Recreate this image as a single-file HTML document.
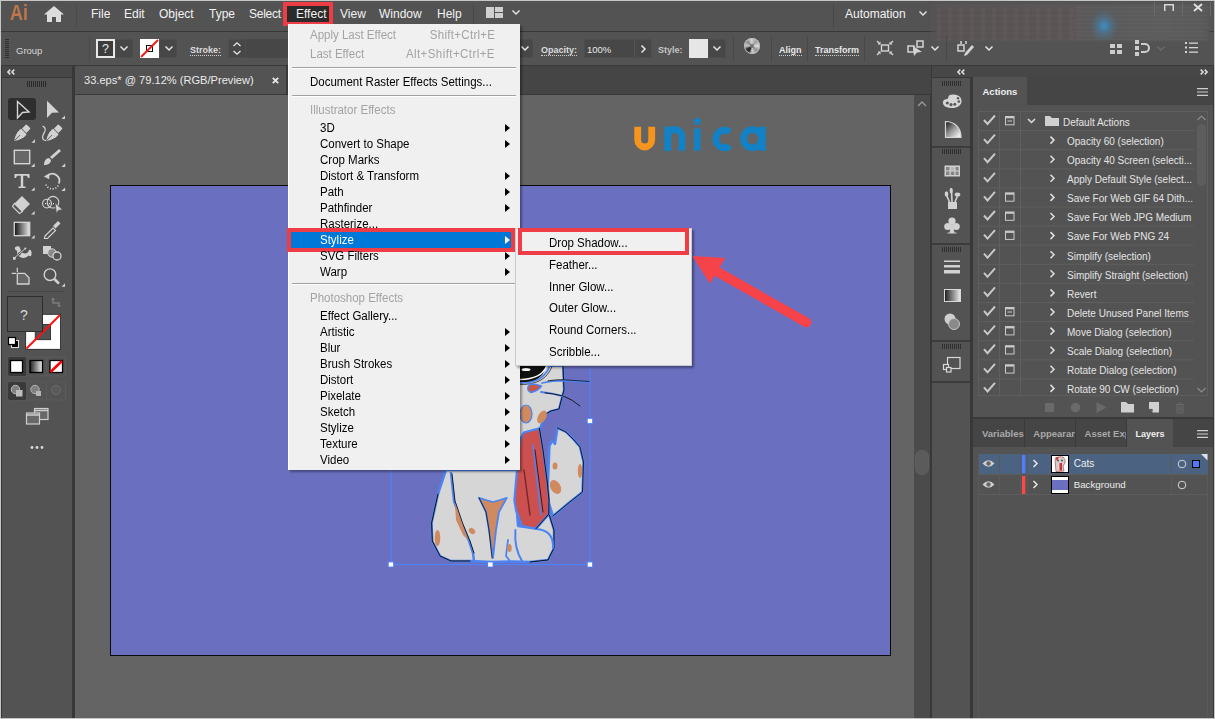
<!DOCTYPE html>
<html><head><meta charset="utf-8">
<style>
*{margin:0;padding:0;box-sizing:border-box}
html,body{width:1215px;height:719px;overflow:hidden}
body{position:relative;background:#c6c6c6;font-family:"Liberation Sans",sans-serif;color:#e6e6e6}
.a{position:absolute}
.t{position:absolute;white-space:nowrap;line-height:1}
svg{position:absolute;overflow:visible}
/* frame */
#frame{left:1px;top:1px;width:1213px;height:717px;background:#383838}
#menubar{left:1px;top:1px;width:1213px;height:30px;background:#535353}
#ctrl{left:1px;top:32px;width:1213px;height:33px;background:#535353}
#lphead{left:2px;top:66px;width:70px;height:11px;background:#474747}
#lp{left:2px;top:78px;width:70px;height:640px;background:#535353}
#tabbar{left:75px;top:66px;width:856px;height:28px;background:#454545}
#tab{left:75px;top:66px;width:211px;height:28px;background:#535353}
#canvas{left:75px;top:95px;width:839px;height:623px;background:#646464}
#vscroll{left:914px;top:95px;width:16px;height:623px;background:#4b4b4b}
#artboard{left:110px;top:185px;width:781px;height:471px;background:#6b6fc0;border:1px solid #0a0a0a}
#rhead{left:932px;top:66px;width:281px;height:11px;background:#474747}
#dock{left:932px;top:78px;width:38px;height:640px;background:#535353}
#rp{left:973px;top:78px;width:240px;height:640px;background:#535353}
.mi{font-size:12px;color:#f2f2f2;top:8px}
.lbl{font-size:9px;font-weight:bold;color:#dcdcdc}
.dot{border-bottom:1px dotted #cfcfcf}
.box{position:absolute;background:#474747;border:1px solid #4d4d4d;border-radius:2px}
.vd{position:absolute;width:1px;background:#484848}
</style></head><body>
<div class="a" id="frame"></div>
<div class="a" id="menubar"></div>
<div class="a" id="ctrl"></div>
<div class="a" id="lphead"></div>
<div class="a" id="lp"></div>
<div class="a" id="tabbar"></div>
<div class="a" id="tab"></div>
<div class="a" id="canvas"></div>
<div class="a" id="vscroll"></div>
<div class="a" id="artboard"></div>
<!-- CAT -->
<svg style="left:0;top:0" width="1215" height="719" viewBox="0 0 1215 719">
<g stroke-linejoin="round" stroke-linecap="round">
<rect x="391.5" y="276.5" width="198.5" height="288" fill="none" stroke="#4a86ff" stroke-width="1"/>
<!-- tail -->
<path d="M548 500 L548 482 L549.5 446 L552 441 L555 444 L557.5 428 L566 432 L574 440 L580 447 L583.5 462 L582.5 492 L568 503.5 L553 516 Z" fill="#d6d6d6" stroke="#4c84f2" stroke-width="2.4"/>
<path d="M557.5 428 L566 432 L574 440 L580 447 L583.5 462 L582.5 492 L568 503.5 L553 516" fill="none" stroke="#111" stroke-width="0.9"/>
<ellipse cx="555" cy="466" rx="2.5" ry="3.5" fill="#d08a5f"/>
<ellipse cx="555.5" cy="487" rx="5" ry="7.5" fill="#d08a5f" transform="rotate(-30 555.5 487)"/>
<ellipse cx="580" cy="471" rx="2.2" ry="7" fill="#d08a5f"/>
<!-- head right of menu -->
<path d="M518 366 L563 366 L564 390 L561 401 L559 409 L551 411 L546 414 L540 428 L532 436 L518 438 Z" fill="#d6d6d6" stroke="#4c84f2" stroke-width="2.2"/>
<path d="M563 366 L564 390 L561 401 L559 409 L551 411 L546 414" fill="none" stroke="#111" stroke-width="1"/>
<path d="M519 366 H546 Q544 377 533 381.5 Q526 383 519 382 Z" fill="#111"/>
<ellipse cx="526" cy="369.5" rx="4.5" ry="1.6" fill="#fff"/>
<path d="M520.5 379.5 Q541 379 546.5 366.5" fill="none" stroke="#fff" stroke-width="1.6"/>
<path d="M519 383 Q543 383.5 549.5 366.5" fill="none" stroke="#4c84f2" stroke-width="1.8"/>
<path d="M519 384.5 Q545 385.5 552 366.5" fill="none" stroke="#111" stroke-width="0.7"/>
<path d="M530 384 Q536 384 541.5 386 Q538 391 531 392.5 Q527 391 528 387 Z" fill="#c85545" stroke="#4c84f2" stroke-width="1.4"/>
<path d="M542 383 Q552 380.5 564 380.5 L589 382" fill="none" stroke="#4c84f2" stroke-width="1.8"/>
<path d="M548 380.8 Q556 379.5 564 379.8 L589 381.5" fill="none" stroke="#111" stroke-width="0.8"/>
<path d="M541 392 Q552 393 564 396.5" fill="none" stroke="#4c84f2" stroke-width="2"/>
<path d="M545 392.8 Q553 393.5 563 396 Q572 399 580 406" fill="none" stroke="#111" stroke-width="0.9"/>
<ellipse cx="526" cy="414" rx="6" ry="9" fill="#d08a5f" stroke="#4c84f2" stroke-width="1.2"/>
<ellipse cx="542" cy="417" rx="4" ry="7" fill="#d08a5f" transform="rotate(30 542 417)"/>
<!-- body -->
<path d="M446 470 L520 470 L516 500 L518 526 L536 528.6 L549 514 L554 530 L554 548 L548 560 L530 562 L512 561.5 L492 562 L470 561 L451 561 L440 556 L432.3 541 L431.6 523 L438 494 Z" fill="#d6d6d6" stroke="#4c84f2" stroke-width="2.4"/>
<path d="M438 494 L431.6 523 L432.3 541 L440 556 L451 561 L470 561" fill="none" stroke="#111" stroke-width="1"/>
<path d="M549 514 L554 530 L554 548 L548 560 L530 562" fill="none" stroke="#111" stroke-width="1"/>
<!-- haunch inner line -->
<path d="M451 473 L454 501 L461.5 523 L469 541 L473 553 L474 561" fill="none" stroke="#4c84f2" stroke-width="2.4"/>
<path d="M452 474 L455 501 L462.5 523 L470 541 L474 553" fill="none" stroke="#111" stroke-width="0.9"/>
<path d="M455 503 L462 523 L468 540 L463 535 L456 520 Z" fill="#d08a5f"/>
<ellipse cx="437.5" cy="538" rx="2.8" ry="8" fill="#d08a5f"/>
<ellipse cx="472" cy="531" rx="3.5" ry="2.6" fill="#d08a5f" transform="rotate(40 472 531)"/>
<!-- chest V -->
<path d="M479 497.8 L486 500 L493 502 L500 500 L506.8 497.8 L499 512 L496 530 L493 558 L489 530 L486 512 Z" fill="#d08a5f" stroke="#4c84f2" stroke-width="1.8"/>
<path d="M479 497.8 L486 512 L489 530 L492 558" fill="none" stroke="#111" stroke-width="0.8"/>
<path d="M508 540 L506 556 L510 561" fill="none" stroke="#4c84f2" stroke-width="1.8"/>
<ellipse cx="509.5" cy="548" rx="2.2" ry="4" fill="#d08a5f"/>
<!-- right paw -->
<path d="M515.4 530 Q514 548 522 561 M536 529 Q554 530 553 548" fill="none" stroke="#4c84f2" stroke-width="2"/>
<!-- scarf -->
<path d="M523.8 432.5 L539.4 428.4 L543 450 L547 480 L549 500 L548.8 514 L536 528.6 L522 526 L516 510 L514.4 500 L517 470 L520 440 Z" fill="#cc5050" stroke="#4c84f2" stroke-width="2.2"/>
<path d="M539.4 428.4 L543 450 L547 480 L549 500 L548.8 514 L536 528.6" fill="none" stroke="#111" stroke-width="1"/>
<path d="M524 470 L530 515" stroke="#7a2a2a" stroke-width="1.5"/>
<path d="M533 445 L541 515" stroke="#4c84f2" stroke-width="1.5"/>
<path d="M535 450 L543 512" stroke="#111" stroke-width="0.8"/>
<!-- handles -->
<rect x="388.5" y="562" width="5" height="5" fill="#fff" stroke="#4a86ff" stroke-width="0.8"/>
<rect x="488" y="562" width="5" height="5" fill="#fff" stroke="#4a86ff" stroke-width="0.8"/>
<rect x="587.5" y="562" width="5" height="5" fill="#fff" stroke="#4a86ff" stroke-width="0.8"/>
<rect x="587.5" y="418.5" width="5" height="5" fill="#fff" stroke="#4a86ff" stroke-width="0.8"/>
</g>
</svg>

<div class="a" id="rhead"></div>
<div class="a" id="dock"></div>
<div class="a" id="rp"></div>
<!-- MENUBAR -->
<div class="t" style="left:10px;top:2px;font-size:22px;color:#bd774a;font-weight:bold;transform:scaleX(0.82);transform-origin:0 0">Ai</div>
<svg style="left:44px;top:6px" width="20" height="17" viewBox="0 0 20 17"><path d="M10 0 L20 8.5 L17 8.5 L17 16 L12 16 L12 11 L8 11 L8 16 L3 16 L3 8.5 L0 8.5 Z" fill="#dcdcdc"/></svg>
<div class="vd" style="left:76px;top:5px;height:22px;background:#4a4a4a"></div>
<div class="t mi" style="left:91px">File</div>
<div class="t mi" style="left:124px">Edit</div>
<div class="t mi" style="left:159px">Object</div>
<div class="t mi" style="left:209px">Type</div>
<div class="t mi" style="left:249px;letter-spacing:-0.25px">Select</div>
<div class="a" style="left:283px;top:2px;width:50px;height:24px;border:4px solid #ef3d47;background:#2b2b2b"></div>
<div class="t mi" style="left:296px">Effect</div>
<div class="t mi" style="left:340px">View</div>
<div class="t mi" style="left:379px">Window</div>
<div class="t mi" style="left:437px">Help</div>
<div class="vd" style="left:473px;top:5px;height:22px;background:#464646"></div>
<svg style="left:486px;top:7px" width="17" height="11"><rect x="0" y="0" width="8" height="11" fill="#cfcfcf"/><rect x="9" y="0" width="8" height="5" fill="#cfcfcf"/><rect x="9" y="6" width="8" height="5" fill="#cfcfcf"/></svg>
<svg style="left:512px;top:10px" width="8" height="5"><path d="M0.5 0.5 L4 4 L7.5 0.5" stroke="#e0e0e0" stroke-width="1.5" fill="none"/></svg>
<div class="vd" style="left:833px;top:4px;height:24px;background:#474747"></div>
<div class="t mi" style="left:845px">Automation</div>
<svg style="left:919px;top:11px" width="8" height="5"><path d="M0.5 0.5 L4 4 L7.5 0.5" stroke="#e0e0e0" stroke-width="1.5" fill="none"/></svg>

<!-- blurred search region -->
<div class="a" style="left:930px;top:4px;width:282px;height:37px;background:linear-gradient(90deg,rgba(83,83,83,0) 0,#5b5656 8px,#5e5858 140px,#5a5a5c 170px,#5d5d5d 230px,#5a5a5a 275px,rgba(83,83,83,0) 282px);filter:blur(1.5px)"></div>
<div class="a" style="left:935px;top:7px;width:140px;height:33px;background:repeating-linear-gradient(90deg,rgba(40,40,55,.18) 0 1px,rgba(0,0,0,0) 1px 3px,rgba(120,100,100,.15) 3px 5px,rgba(0,0,0,0) 5px 7px,rgba(40,40,55,.12) 7px 9px,rgba(0,0,0,0) 9px 11px),repeating-linear-gradient(0deg,rgba(130,110,110,.12) 0 2px,rgba(40,40,50,.12) 2px 3px,rgba(0,0,0,0) 3px 6px);filter:blur(.8px)"></div>
<div class="a" style="left:1075px;top:7px;width:135px;height:33px;background:repeating-linear-gradient(0deg,rgba(120,120,120,.12) 0 1.5px,rgba(0,0,0,0) 1.5px 4px);filter:blur(.5px)"></div>
<div class="a" style="left:1090px;top:10px;width:28px;height:32px;border-radius:50%;background:radial-gradient(closest-side,rgba(55,150,215,.95),rgba(70,130,170,.5) 45%,rgba(90,100,110,0));filter:blur(1.5px)"></div>
<svg style="left:1164px;top:4px" width="10" height="7"><path d="M0.75 7 V0.75 H9.25 V7" stroke="#d8d8d8" stroke-width="1.5" fill="none"/></svg>
<svg style="left:1193px;top:3px" width="10" height="9"><path d="M1 1 L9 8 M9 1 L1 8" stroke="#dedede" stroke-width="2" fill="none"/></svg>
<div class="vd" style="left:1154px;top:2px;height:14px;background:#6a6a6a"></div>
<div class="vd" style="left:1182px;top:2px;height:14px;background:#6a6a6a"></div>
<div class="vd" style="left:1210px;top:2px;height:14px;background:#6a6a6a"></div>

<!-- CONTROL BAR -->
<svg style="left:5px;top:39px" width="5" height="19"><g stroke="#2e2e2e" stroke-width="1">
<path d="M0 0.5H4M0 2.5H4M0 4.5H4M0 6.5H4M0 8.5H4M0 10.5H4M0 12.5H4M0 14.5H4M0 16.5H4M0 18.5H4"/></g></svg>
<div class="t" style="left:16px;top:46px;font-size:9.5px;color:#d6d6d6">Group</div>
<div class="vd" style="left:89px;top:36px;height:26px;background:#4a4a4a"></div>
<div class="a" style="left:96px;top:39px;width:19px;height:19px;border:2px solid #e8e8e8;background:#3c3c3c"></div>
<div class="t" style="left:102px;top:43px;font-size:12.5px;color:#e6e6e6">?</div>
<div class="box" style="left:115px;top:39px;width:18px;height:19px"></div>
<svg style="left:120px;top:46px" width="8" height="5"><path d="M0.5 0.5 L4 4 L7.5 0.5" stroke="#e6e6e6" stroke-width="1.5" fill="none"/></svg>
<svg style="left:140px;top:39px" width="19" height="19"><rect width="19" height="19" fill="#fff"/><rect x="6.5" y="6.5" width="6" height="6" fill="none" stroke="#111" stroke-width="1"/><path d="M1 18 L18 1" stroke="#ee1c1c" stroke-width="2"/></svg>
<div class="box" style="left:159px;top:39px;width:18px;height:19px"></div>
<svg style="left:165px;top:46px" width="8" height="5"><path d="M0.5 0.5 L4 4 L7.5 0.5" stroke="#e6e6e6" stroke-width="1.5" fill="none"/></svg>
<div class="t lbl dot" style="left:190px;top:46px;padding-bottom:0px">Stroke:</div>
<div class="box" style="left:228px;top:39px;width:18px;height:19px"></div>
<svg style="left:233px;top:42px" width="8" height="13"><path d="M0.5 4 L4 0.8 L7.5 4 M0.5 9 L4 12.2 L7.5 9" stroke="#e6e6e6" stroke-width="1.3" fill="none"/></svg>
<div class="a" style="left:246px;top:39px;width:50px;height:19px;background:#474747"></div>

<div class="box" style="left:514px;top:39px;width:19px;height:19px"></div>
<svg style="left:521px;top:46px" width="8" height="5"><path d="M0.5 0.5 L4 4 L7.5 0.5" stroke="#e6e6e6" stroke-width="1.5" fill="none"/></svg>
<div class="t lbl dot" style="left:541px;top:46px;padding-bottom:0px">Opacity:</div>
<div class="box" style="left:584px;top:39px;width:68px;height:19px"></div>
<div class="vd" style="left:634px;top:40px;height:17px;background:#555"></div>
<div class="t" style="left:587px;top:45px;font-size:9.5px;color:#e8e8e8">100%</div>
<svg style="left:641px;top:45px" width="5" height="8"><path d="M0.5 0.5 L4 4 L0.5 7.5" stroke="#e6e6e6" stroke-width="1.5" fill="none"/></svg>
<div class="t lbl" style="left:658px;top:46px;color:#c4c4c4">Style:</div>
<div class="a" style="left:689px;top:39px;width:19px;height:19px;background:#e6e6e6"></div>
<div class="box" style="left:708px;top:39px;width:18px;height:19px"></div>
<svg style="left:713px;top:46px" width="8" height="5"><path d="M0.5 0.5 L4 4 L7.5 0.5" stroke="#e6e6e6" stroke-width="1.5" fill="none"/></svg>
<div class="vd" style="left:733px;top:36px;height:26px"></div>
<div class="a" style="left:744px;top:38px;width:16px;height:16px;border-radius:50%;background:conic-gradient(from 0deg,#cfcfcf,#9a9a9a 12%,#e0e0e0 25%,#8c8c8c 37%,#d0d0d0 50%,#2a2a2a 58%,#303030 66%,#c8c8c8 75%,#8a8a8a 87%,#dedede);box-shadow:0 0 0 1px #b8b8b8 inset"></div><div class="a" style="left:750px;top:44px;width:4px;height:4px;border-radius:50%;background:#777"></div>
<div class="vd" style="left:771px;top:36px;height:26px"></div>
<div class="t lbl dot" style="left:779px;top:46px;padding-bottom:0px;color:#e8e8e8">Align</div>
<div class="vd" style="left:807px;top:36px;height:26px"></div>
<div class="t lbl dot" style="left:815px;top:46px;padding-bottom:0px;color:#e8e8e8">Transform</div>
<div class="vd" style="left:864px;top:36px;height:26px"></div>
<svg style="left:876px;top:40px" width="18" height="16"><g stroke="#d4d4d4" stroke-width="1.4" fill="none"><rect x="5.5" y="5" width="7" height="6"/><path d="M1 1 L4 4 M17 1 L14 4 M1 15 L4 12 M17 15 L14 12"/></g><g fill="#d4d4d4"><path d="M4.5 4.5 L4.5 1.5 L1.5 4.5 Z M13.5 4.5 L13.5 1.5 L16.5 4.5 Z M4.5 11.5 L4.5 14.5 L1.5 11.5 Z M13.5 11.5 L13.5 14.5 L16.5 11.5 Z"/></g></svg>
<svg style="left:907px;top:40px" width="18" height="17"><g stroke="#d4d4d4" stroke-width="1.5" fill="none"><rect x="1" y="6" width="6" height="6"/><rect x="10" y="1" width="6" height="6"/></g><path d="M6 6 L15 12 L10 12.5 L7 16 Z" fill="#d4d4d4"/></svg>
<svg style="left:931px;top:46px" width="8" height="5"><path d="M0.5 0.5 L4 4 L7.5 0.5" stroke="#e6e6e6" stroke-width="1.5" fill="none"/></svg>
<div class="vd" style="left:946px;top:36px;height:26px"></div>
<svg style="left:957px;top:40px" width="18" height="17"><g stroke="#d4d4d4" stroke-width="1.5" fill="none"><rect x="1" y="5" width="6" height="6"/><path d="M4 1V4 M9 1V4"/></g><path d="M8 13 L15 5 L17 7 L10 15 L7 16 Z" fill="#d4d4d4"/></svg>
<svg style="left:985px;top:46px" width="8" height="5"><path d="M0.5 0.5 L4 4 L7.5 0.5" stroke="#e6e6e6" stroke-width="1.5" fill="none"/></svg>
<svg style="left:1110px;top:42px" width="12" height="13"><g fill="#cdcdcd"><rect x="0" y="2" width="5" height="4"/><rect x="7" y="2" width="5" height="4"/><rect x="0" y="8" width="5" height="4"/><rect x="7" y="8" width="5" height="4"/></g><path d="M6 0V13 M0 7H12" stroke="#535353" stroke-width="1"/></svg>
<svg style="left:1135px;top:40px" width="16" height="16"><g fill="#cdcdcd"><rect x="0" y="0" width="4" height="4"/><rect x="0" y="6" width="4" height="4"/><rect x="0" y="12" width="4" height="4"/></g><path d="M6 4 H10 A4 4 0 0 1 10 12 H6" stroke="#cdcdcd" stroke-width="2" fill="none"/></svg>
<svg style="left:1157px;top:46px" width="8" height="5"><path d="M0.5 0.5 L4 4 L7.5 0.5" stroke="#6c6c6c" stroke-width="1.3" fill="none"/></svg>
<svg style="left:1185px;top:42px" width="13" height="11"><g fill="#d4d4d4"><rect x="0" y="0" width="2" height="2"/><rect x="0" y="4.5" width="2" height="2"/><rect x="0" y="9" width="2" height="2"/><rect x="4" y="0.5" width="9" height="1.3"/><rect x="4" y="5" width="9" height="1.3"/><rect x="4" y="9.5" width="9" height="1.3"/></g></svg>

<!-- LEFT TOOLBAR -->
<svg style="left:7px;top:69px" width="8" height="6"><path d="M3.3 0.6 L0.9 3 L3.3 5.4 M7.3 0.6 L4.9 3 L7.3 5.4" stroke="#e0e0e0" stroke-width="1.5" fill="none"/></svg>
<svg style="left:27px;top:81px" width="19" height="6"><g stroke="#2a2a2a" stroke-width="1"><path d="M0.5 0V6M2.5 0V6M4.5 0V6M6.5 0V6M8.5 0V6M10.5 0V6M12.5 0V6M14.5 0V6M16.5 0V6M18.5 0V6"/></g></svg>
<div class="a" style="left:8px;top:98px;width:28px;height:22px;background:#2e2e2e;border-radius:3px"></div>
<svg style="left:0;top:0" width="72" height="720" viewBox="0 0 72 720">
<g fill="#d2d2d2">
<!-- selection outline -->
<path d="M17.5 101.5 L29 112 L22.5 112.5 L17.5 118 Z" fill="none" stroke="#d6d6d6" stroke-width="1.4" stroke-linejoin="miter"/>
<!-- direct selection -->
<path d="M47 100.8 L59 112.5 L52 112.8 L47 118 Z"/>
<path d="M65 115.5 V119 H61.5 Z"/>
<!-- pen -->
<path d="M22 128.6 L25.8 124.8 Q26.3 124.3 26.8 124.8 L30.1 128.1 Q30.6 128.6 30.1 129.1 L26.3 132.9 Z"/>
<path d="M14.4 140.7 C14.8 136.5 17 131.5 21.2 128.8 L26.6 134.2 C23.9 138.2 19 140.3 14.4 140.7 Z"/>
<path d="M15 140.1 L20 135.1" stroke="#535353" stroke-width="0.9"/>
<path d="M35 139.2 V142.7 H31.5 Z"/>
<!-- curvature pen -->
<path d="M54 128.6 L57.8 124.8 Q58.3 124.3 58.8 124.8 L62.1 128.1 Q62.6 128.6 62.1 129.1 L58.3 132.9 Z"/>
<path d="M46.4 140.7 C46.8 136.5 49 131.5 53.2 128.8 L58.6 134.2 C55.9 138.2 51 140.3 46.4 140.7 Z"/>
<path d="M47 140.1 L52 135.1" stroke="#535353" stroke-width="0.9"/>
<path d="M42.6 126.1 C44.5 127 45.8 128.5 45 131 C44 133.5 42.2 135.5 42.6 138 C42.9 139.8 44.5 140.5 46 140.5" fill="none" stroke="#d2d2d2" stroke-width="1.2"/>
<!-- rect -->
<rect x="14.3" y="150.3" width="15.4" height="13.4" fill="#686868" stroke="#d4d4d4" stroke-width="1.4"/>
<path d="M34.7 163.3 V167 H31 Z"/>
<!-- brush -->
<path d="M59 149 L61 151 L52 159 L50 157 Z"/><path d="M44 165 C44 161 46 158 49 158 L51 160 C51 163 48 165 44 165 Z"/>
<path d="M65.2 163.3 V167 H61.5 Z"/>
<!-- Type -->
<path d="M14.5 174 H29.5 V178 H28 L27 175.8 H23.2 V186.5 H25.5 V188 H18.5 V186.5 H20.8 V175.8 H17 L16 178 H14.5 Z"/>
<path d="M34.7 187.3 V190.8 H31.2 Z"/>
<!-- rotate -->
<path d="M48.5 175 A7 7 0 0 1 58.8 183.6" fill="none" stroke="#d2d2d2" stroke-width="1.8"/>
<path d="M58.3 185.5 A7 7 0 0 1 45.5 183.5" fill="none" stroke="#d2d2d2" stroke-width="1.6" stroke-dasharray="1.2 1.6"/>
<path d="M43.9 176.5 L49.5 173.3 L49.1 179.2 Z"/>
<path d="M65.1 187.5 V191 H61.4 Z"/>
<!-- eraser -->
<path d="M22 196 L30 204 L22.5 211.5 L14.5 203.5 Z"/>
<path d="M14.5 203.5 L22.5 211.5 L19.5 213.5 L12.5 206.5 Z" fill="none" stroke="#d2d2d2" stroke-width="1.2"/>
<path d="M34.7 211 V214.6 H31.1 Z"/>
<!-- shape builder -->
<circle cx="47" cy="203.6" r="4.4" fill="none" stroke="#d2d2d2" stroke-width="1.1"/>
<circle cx="53" cy="202.2" r="5.8" fill="none" stroke="#d2d2d2" stroke-width="1.1"/>
<path d="M45 203.6 H55" stroke="#e0e0e0" stroke-width="1.3" stroke-dasharray="1 1"/>
<path d="M55 202.8 L62.7 209.8 L58.6 210.3 L56.4 213.5 Z" stroke="#535353" stroke-width="0.8"/>
<!-- gradient -->
<defs><linearGradient id="tg" x1="0" x2="1"><stop offset="0" stop-color="#111"/><stop offset="1" stop-color="#e8e8e8"/></linearGradient>
<linearGradient id="tg2" x1="0" x2="1"><stop offset="0" stop-color="#222"/><stop offset="1" stop-color="#f0f0f0"/></linearGradient></defs>
<rect x="14.3" y="222.3" width="15.4" height="13.4" fill="url(#tg)" stroke="#d4d4d4" stroke-width="1.3"/>
<path d="M34.7 235 V238.5 H31.2 Z"/>
<!-- eyedropper -->
<path d="M45 236 L53 228 L55.5 230.5 L47.5 238.5 L44.5 238.5 Z" fill="none" stroke="#d2d2d2" stroke-width="1.2"/>
<path d="M53 226 L58 221 L60.5 223.5 L55.5 228.5 Z"/>
<!-- puppet warp -->
<path d="M14.8 248.5 C15 246.5 17.5 245.8 19.3 246.8 C20.3 247.5 20.2 249.5 21 251 C22.5 253.5 25.5 254.5 28 252.2 C28.8 251.4 28.5 250 29.6 249.8 C31.2 249.7 32 252.5 31.4 255 C30.8 256.8 29.6 256.5 28.6 255.6 C26.5 257.8 23 258.6 20.5 257.2 C18 255.8 16.8 253 17.2 250.8 C16.2 250.3 15 249.8 14.8 248.5 Z"/>
<circle cx="19.2" cy="254" r="1.9" fill="#535353" stroke="#d2d2d2" stroke-width="0.9"/>
<path d="M14.8 257.5 L25.5 248.3" stroke="#535353" stroke-width="2.2"/>
<path d="M14.8 257.5 L25.5 248.3" stroke="#d2d2d2" stroke-width="0.9"/>
<circle cx="25.3" cy="248.5" r="1" fill="#d2d2d2"/>
<rect x="13" y="257" width="2.7" height="2.7"/>
<!-- blend -->
<rect x="43" y="246" width="8" height="8"/>
<circle cx="52" cy="253" r="4.2" fill="#8a8a8a" stroke="#d2d2d2" stroke-width="1"/>
<circle cx="57" cy="256" r="4" fill="#535353" stroke="#d2d2d2" stroke-width="1.3"/>
<!-- artboard -->
<path d="M17.3 267.7 V272 M11.7 273.3 H16" stroke="#d2d2d2" stroke-width="1.2"/>
<path d="M17.3 273.3 H24.7 L29 277.8 V284 H17.3 Z" fill="#666" stroke="#d2d2d2" stroke-width="1.3"/>
<!-- zoom -->
<circle cx="50" cy="274.7" r="5.8" fill="none" stroke="#d2d2d2" stroke-width="1.4"/>
<path d="M54.3 279 L59 283.7" stroke="#d2d2d2" stroke-width="2.6"/>
<path d="M65 283.2 V286.7 H61.5 Z"/>
</g>
<path d="M8 291.5 H64" stroke="#464646" stroke-width="1"/>
<!-- stroke box -->
<rect x="25.7" y="314.3" width="34.9" height="35" fill="#fff" stroke="#1a1a1a" stroke-width="0.8"/>
<rect x="35.2" y="324.4" width="15.4" height="15.3" fill="#535353" stroke="#222" stroke-width="0.8"/>
<path d="M26.5 348.5 L60 315" stroke="#ff1010" stroke-width="2"/>
<!-- fill box -->
<rect x="7.5" y="296.5" width="35" height="35" fill="#535353" stroke="#2d2d2d" stroke-width="1"/>
<text x="20" y="320" font-family="Liberation Sans" font-size="14" fill="#d8d8d8">?</text>
<!-- swap -->
<path d="M53 298 L53 303 H59 V306" fill="none" stroke="#7d7d7d" stroke-width="1.5"/>
<path d="M51 300 L53 297.5 L55 300 Z M57 305 H61 L59 307.5 Z" fill="#7d7d7d"/>
<!-- default -->
<rect x="11.5" y="340.5" width="7" height="7" fill="#000" stroke="#e0e0e0" stroke-width="1"/>
<rect x="8.5" y="337.5" width="7" height="7" fill="#fff" stroke="#000" stroke-width="1.2"/>
<!-- color modes -->
<rect x="8" y="357" width="57.5" height="19" fill="none" stroke="#5e5e5e" stroke-width="0.8" rx="2"/>
<rect x="8" y="357" width="18.5" height="19" fill="#3a3a3a" rx="2"/>
<path d="M26.8 357 V376 M46.5 357 V376" stroke="#5d5d5d" stroke-width="0.8"/>
<rect x="10.5" y="360.5" width="12" height="12" fill="#fff" stroke="#000" stroke-width="1.3"/>
<rect x="30" y="360.5" width="12.5" height="12" fill="url(#tg2)" stroke="#000" stroke-width="1.3"/>
<rect x="50" y="360.5" width="12.5" height="12" fill="#fff" stroke="#000" stroke-width="1.3"/>
<path d="M50.5 372 L62 361" stroke="#ff0000" stroke-width="2.5"/>
<!-- draw modes -->
<rect x="8" y="382" width="57.5" height="18" fill="none" stroke="#5e5e5e" stroke-width="0.8" rx="2"/>
<rect x="8" y="382" width="18.5" height="18" fill="#3a3a3a" rx="2"/>
<path d="M26.8 382 V400 M46.5 382 V400" stroke="#5d5d5d" stroke-width="0.8"/>
<circle cx="15.5" cy="389.5" r="4.2" fill="#808080" stroke="#bdbdbd" stroke-width="1"/>
<rect x="16" y="390" width="6.5" height="6.5" fill="#bdbdbd"/>
<circle cx="35" cy="389.5" r="4.2" fill="#808080" stroke="#b5b5b5" stroke-width="1"/>
<rect x="36" y="391" width="5" height="5" fill="#b5b5b5"/>
<circle cx="56" cy="390" r="4.5" fill="#5a5a5a" stroke="#6c6c6c" stroke-width="1"/>
<!-- screen mode -->
<rect x="34.5" y="408.5" width="13.5" height="11" fill="#686868" stroke="#cfcfcf" stroke-width="1.2"/>
<path d="M34.5 410.5 H48" stroke="#cfcfcf" stroke-width="1.5"/>
<rect x="26.5" y="413" width="13" height="11" fill="#686868" stroke="#cfcfcf" stroke-width="1.2"/>
<path d="M26.5 415 H39.5" stroke="#cfcfcf" stroke-width="1.5"/>
<!-- dots -->
<circle cx="32" cy="447.5" r="1.4" fill="#d8d8d8"/><circle cx="37" cy="447.5" r="1.4" fill="#d8d8d8"/><circle cx="42" cy="447.5" r="1.4" fill="#d8d8d8"/>
</svg>

<!-- TAB -->
<div class="t" style="left:84px;top:75px;font-size:11.1px;color:#eaeaea">33.eps* @ 79.12% (RGB/Preview)</div>
<svg style="left:272px;top:77px" width="7" height="7"><path d="M0.8 0.8 L6.2 6.2 M6.2 0.8 L0.8 6.2" stroke="#e8e8e8" stroke-width="1.8"/></svg>
<div class="a" style="left:286px;top:66px;width:2px;height:28px;background:#3a3a3a"></div>
<!-- vscroll -->
<svg style="left:914px;top:95px" width="16" height="400"><path d="M4 11 L8 7 L12 11" stroke="#9a9a9a" stroke-width="1.3" fill="none"/><rect x="1.5" y="355.5" width="13" height="24" rx="6" fill="#5b5b5b" stroke="#606060"/></svg>
<!-- unica logo -->
<svg style="left:630px;top:112px" width="140" height="42" viewBox="0 0 140 42">
<path d="M7.7 14.7 V28 A7 7 0 0 0 21.7 28 V14.7" stroke="#f7941d" stroke-width="6.8" fill="none"/>
<path d="M37.8 38.7 V24.5 A7 7 0 0 1 51.8 24.5 V38.7" stroke="#1281c6" stroke-width="6.8" fill="none"/>
<path d="M34.5 14.7 H41 V38.7 H34.5 Z" fill="#1281c6"/>
<rect x="64" y="16.5" width="6.5" height="22.2" fill="#1281c6"/>
<path d="M62.5 8.5 L67.3 5.5 L72 8.5 L67.3 11.2 Z M64.3 10 V12 Q67.3 13.8 70.3 12 V10" fill="#1281c6"/>
<path d="M100 20 A8.8 8.8 0 1 0 100 34" stroke="#1281c6" stroke-width="6.8" fill="none"/>
<circle cx="122.5" cy="26.7" r="9" stroke="#1281c6" stroke-width="6.8" fill="none"/>
<rect x="129" y="14.7" width="6.8" height="24" fill="#1281c6"/>
</svg>
<!-- MENU -->
<div class="a" style="left:288px;top:24px;width:232px;height:446px;background:#f0f0f0;border-left:1px solid #fff;box-shadow:2px 2px 2px rgba(0,0,0,.35)"></div>
<div class="t" style="left:310px;top:29.05px;font-size:12px;transform:scaleX(0.958);transform-origin:0 0;color:#a3a3a3;">Apply Last Effect</div>
<div class="t" style="left:310px;top:48.05px;font-size:12px;transform:scaleX(0.958);transform-origin:0 0;color:#a3a3a3;">Last Effect</div>
<div class="t" style="right:720px;top:29.05px;font-size:12px;transform:scaleX(0.958);transform-origin:100% 0;color:#a3a3a3;letter-spacing:0.3px">Shift+Ctrl+E</div>
<div class="t" style="right:720px;top:48.05px;font-size:12px;transform:scaleX(0.958);transform-origin:100% 0;color:#a3a3a3;letter-spacing:0.45px">Alt+Shift+Ctrl+E</div>
<div class="a" style="left:292px;top:67px;width:224px;height:1px;background:#a0a0a0"></div><div class="a" style="left:292px;top:68px;width:224px;height:1px;background:#fff"></div>
<div class="a" style="left:292px;top:95px;width:224px;height:1px;background:#a0a0a0"></div><div class="a" style="left:292px;top:96px;width:224px;height:1px;background:#fff"></div>
<div class="a" style="left:292px;top:283px;width:224px;height:1px;background:#a0a0a0"></div><div class="a" style="left:292px;top:284px;width:224px;height:1px;background:#fff"></div>
<div class="t" style="left:310px;top:75.65px;font-size:12px;transform:scaleX(0.958);transform-origin:0 0;color:#000;">Document Raster Effects Settings...</div>
<div class="t" style="left:310px;top:103.75px;font-size:12px;transform:scaleX(0.958);transform-origin:0 0;color:#a3a3a3;">Illustrator Effects</div>
<div class="a" style="left:287px;top:228px;width:228px;height:24px;border:4px solid #ef3d47;background:#0078d7"></div>
<div class="t" style="left:320px;top:121.75px;font-size:12px;transform:scaleX(0.958);transform-origin:0 0;color:#000;">3D</div>
<svg style="left:505px;top:123.5px" width="5" height="8"><path d="M0 0 L5 4 L0 8 Z" fill="#000"/></svg>
<div class="t" style="left:320px;top:137.75px;font-size:12px;transform:scaleX(0.958);transform-origin:0 0;color:#000;">Convert to Shape</div>
<svg style="left:505px;top:139.5px" width="5" height="8"><path d="M0 0 L5 4 L0 8 Z" fill="#000"/></svg>
<div class="t" style="left:320px;top:153.75px;font-size:12px;transform:scaleX(0.958);transform-origin:0 0;color:#000;">Crop Marks</div>
<div class="t" style="left:320px;top:169.75px;font-size:12px;transform:scaleX(0.958);transform-origin:0 0;color:#000;">Distort &amp; Transform</div>
<svg style="left:505px;top:171.5px" width="5" height="8"><path d="M0 0 L5 4 L0 8 Z" fill="#000"/></svg>
<div class="t" style="left:320px;top:185.75px;font-size:12px;transform:scaleX(0.958);transform-origin:0 0;color:#000;">Path</div>
<svg style="left:505px;top:187.5px" width="5" height="8"><path d="M0 0 L5 4 L0 8 Z" fill="#000"/></svg>
<div class="t" style="left:320px;top:201.75px;font-size:12px;transform:scaleX(0.958);transform-origin:0 0;color:#000;">Pathfinder</div>
<svg style="left:505px;top:203.5px" width="5" height="8"><path d="M0 0 L5 4 L0 8 Z" fill="#000"/></svg>
<div class="t" style="left:320px;top:217.75px;font-size:12px;transform:scaleX(0.958);transform-origin:0 0;color:#000;">Rasterize...</div>
<div class="t" style="left:320px;top:233.75px;font-size:12px;transform:scaleX(0.958);transform-origin:0 0;color:#fff;">Stylize</div>
<svg style="left:505px;top:235.5px" width="5" height="8"><path d="M0 0 L5 4 L0 8 Z" fill="#fff"/></svg>
<div class="t" style="left:320px;top:249.75px;font-size:12px;transform:scaleX(0.958);transform-origin:0 0;color:#000;">SVG Filters</div>
<svg style="left:505px;top:251.5px" width="5" height="8"><path d="M0 0 L5 4 L0 8 Z" fill="#000"/></svg>
<div class="t" style="left:320px;top:265.75px;font-size:12px;transform:scaleX(0.958);transform-origin:0 0;color:#000;">Warp</div>
<svg style="left:505px;top:267.5px" width="5" height="8"><path d="M0 0 L5 4 L0 8 Z" fill="#000"/></svg>
<div class="t" style="left:310px;top:292.25px;font-size:12px;transform:scaleX(0.958);transform-origin:0 0;color:#a3a3a3;">Photoshop Effects</div>
<div class="t" style="left:320px;top:309.95px;font-size:12px;transform:scaleX(0.958);transform-origin:0 0;color:#000;">Effect Gallery...</div>
<div class="t" style="left:320px;top:325.95px;font-size:12px;transform:scaleX(0.958);transform-origin:0 0;color:#000;">Artistic</div>
<svg style="left:505px;top:327.7px" width="5" height="8"><path d="M0 0 L5 4 L0 8 Z" fill="#000"/></svg>
<div class="t" style="left:320px;top:341.95px;font-size:12px;transform:scaleX(0.958);transform-origin:0 0;color:#000;">Blur</div>
<svg style="left:505px;top:343.7px" width="5" height="8"><path d="M0 0 L5 4 L0 8 Z" fill="#000"/></svg>
<div class="t" style="left:320px;top:357.95px;font-size:12px;transform:scaleX(0.958);transform-origin:0 0;color:#000;">Brush Strokes</div>
<svg style="left:505px;top:359.7px" width="5" height="8"><path d="M0 0 L5 4 L0 8 Z" fill="#000"/></svg>
<div class="t" style="left:320px;top:373.95px;font-size:12px;transform:scaleX(0.958);transform-origin:0 0;color:#000;">Distort</div>
<svg style="left:505px;top:375.7px" width="5" height="8"><path d="M0 0 L5 4 L0 8 Z" fill="#000"/></svg>
<div class="t" style="left:320px;top:389.95px;font-size:12px;transform:scaleX(0.958);transform-origin:0 0;color:#000;">Pixelate</div>
<svg style="left:505px;top:391.7px" width="5" height="8"><path d="M0 0 L5 4 L0 8 Z" fill="#000"/></svg>
<div class="t" style="left:320px;top:405.95px;font-size:12px;transform:scaleX(0.958);transform-origin:0 0;color:#000;">Sketch</div>
<svg style="left:505px;top:407.7px" width="5" height="8"><path d="M0 0 L5 4 L0 8 Z" fill="#000"/></svg>
<div class="t" style="left:320px;top:421.95px;font-size:12px;transform:scaleX(0.958);transform-origin:0 0;color:#000;">Stylize</div>
<svg style="left:505px;top:423.7px" width="5" height="8"><path d="M0 0 L5 4 L0 8 Z" fill="#000"/></svg>
<div class="t" style="left:320px;top:437.95px;font-size:12px;transform:scaleX(0.958);transform-origin:0 0;color:#000;">Texture</div>
<svg style="left:505px;top:439.7px" width="5" height="8"><path d="M0 0 L5 4 L0 8 Z" fill="#000"/></svg>
<div class="t" style="left:320px;top:453.95px;font-size:12px;transform:scaleX(0.958);transform-origin:0 0;color:#000;">Video</div>
<svg style="left:505px;top:455.7px" width="5" height="8"><path d="M0 0 L5 4 L0 8 Z" fill="#000"/></svg>
<div class="a" style="left:515px;top:228px;width:177px;height:138px;background:#f0f0f0;border:1px solid #cacaca;box-shadow:2px 2px 2px rgba(0,0,0,.35)"></div>
<div class="a" style="left:518px;top:228px;width:171px;height:27px;border:4px solid #ef3d47"></div>
<div class="t" style="left:549px;top:236.95px;font-size:12px;transform:scaleX(0.958);transform-origin:0 0;color:#000;">Drop Shadow...</div>
<div class="t" style="left:549px;top:258.75px;font-size:12px;transform:scaleX(0.958);transform-origin:0 0;color:#000;">Feather...</div>
<div class="t" style="left:549px;top:280.55px;font-size:12px;transform:scaleX(0.958);transform-origin:0 0;color:#000;">Inner Glow...</div>
<div class="t" style="left:549px;top:302.35px;font-size:12px;transform:scaleX(0.958);transform-origin:0 0;color:#000;">Outer Glow...</div>
<div class="t" style="left:549px;top:324.15px;font-size:12px;transform:scaleX(0.958);transform-origin:0 0;color:#000;">Round Corners...</div>
<div class="t" style="left:549px;top:345.95px;font-size:12px;transform:scaleX(0.958);transform-origin:0 0;color:#000;">Scribble...</div>
<svg style="left:0;top:0" width="1215" height="719"><path d="M692.5 256 L725.2 258.1 L709.9 283.8 Z" fill="#f6434a"/><path d="M716 271 L806.5 322.5" stroke="#f6434a" stroke-width="9.6" stroke-linecap="round"/></svg>
<!-- RIGHT DOCK/PANELS -->
<svg style="left:957px;top:69px" width="8" height="6"><path d="M3.3 0.6 L0.9 3 L3.3 5.4 M7.3 0.6 L4.9 3 L7.3 5.4" stroke="#e0e0e0" stroke-width="1.5" fill="none"/></svg>
<svg style="left:1200px;top:69px" width="8" height="6"><path d="M0.7 0.6 L3.1 3 L0.7 5.4 M4.7 0.6 L7.1 3 L4.7 5.4" stroke="#e0e0e0" stroke-width="1.5" fill="none"/></svg>
<div class="a" style="left:932px;top:146px;width:38px;height:2px;background:#3c3c3c"></div>
<div class="a" style="left:932px;top:243px;width:38px;height:2px;background:#3c3c3c"></div>
<div class="a" style="left:932px;top:340px;width:38px;height:2px;background:#3c3c3c"></div>
<div class="a" style="left:932px;top:381px;width:38px;height:2px;background:#3c3c3c"></div>
<svg style="left:942px;top:81px" width="19" height="5"><g stroke="#2f2f2f" stroke-width="1"><path d="M0.5 0V5M2.5 0V5M4.5 0V5M6.5 0V5M8.5 0V5M10.5 0V5M12.5 0V5M14.5 0V5M16.5 0V5M18.5 0V5"/></g></svg>
<svg style="left:942px;top:149px" width="19" height="5"><g stroke="#2f2f2f" stroke-width="1"><path d="M0.5 0V5M2.5 0V5M4.5 0V5M6.5 0V5M8.5 0V5M10.5 0V5M12.5 0V5M14.5 0V5M16.5 0V5M18.5 0V5"/></g></svg>
<svg style="left:942px;top:247px" width="19" height="5"><g stroke="#2f2f2f" stroke-width="1"><path d="M0.5 0V5M2.5 0V5M4.5 0V5M6.5 0V5M8.5 0V5M10.5 0V5M12.5 0V5M14.5 0V5M16.5 0V5M18.5 0V5"/></g></svg>
<svg style="left:942px;top:344px" width="19" height="5"><g stroke="#2f2f2f" stroke-width="1"><path d="M0.5 0V5M2.5 0V5M4.5 0V5M6.5 0V5M8.5 0V5M10.5 0V5M12.5 0V5M14.5 0V5M16.5 0V5M18.5 0V5"/></g></svg>
<svg style="left:932px;top:0" width="40" height="400" viewBox="932 0 40 400">
<defs><linearGradient id="dg" x1="0" x2="1"><stop offset="0" stop-color="#1a1a1a"/><stop offset="1" stop-color="#eeeeee"/></linearGradient>
<linearGradient id="qg" x1="0" y1="0" x2="0.9" y2="0.9"><stop offset="0" stop-color="#111"/><stop offset="0.55" stop-color="#9a9a9a"/><stop offset="1" stop-color="#f0f0f0"/></linearGradient></defs>
<!-- palette -->
<path d="M952.5 94.5 C959 94 962 98 961.5 102 C961 105.5 957 108.5 951 108 C945 107.5 942.5 105 943 102 C943.5 99 946.5 99.5 948 98.5 C949 96 948 94.8 952.5 94.5 Z" fill="#d6d6d6"/>
<circle cx="947.3" cy="103" r="1.6" fill="#5a5a5a"/><circle cx="951" cy="104.7" r="1.6" fill="#5a5a5a"/><circle cx="954.8" cy="104.2" r="1.5" fill="#5a5a5a"/><circle cx="958.8" cy="101.6" r="1.3" fill="#5a5a5a"/><circle cx="958" cy="98.3" r="1.2" fill="#5a5a5a"/>
<!-- quarter gradient -->
<path d="M945.5 121.5 V137.5 H961 C961 128 955 121.5 945.5 121.5 Z" fill="url(#qg)" stroke="#d8d8d8" stroke-width="1.2"/>
<!-- grid -->
<rect x="944.5" y="165.5" width="15.5" height="11" fill="#d0d0d0"/>
<rect x="946" y="167" width="3.5" height="3.5" fill="#858585"/><rect x="950.8" y="167" width="3.5" height="3.5" fill="#b8b8b8"/><rect x="955.6" y="167" width="3" height="3.5" fill="#858585"/>
<rect x="946" y="171.5" width="3.5" height="3.5" fill="#858585"/><rect x="950.8" y="171.5" width="3.5" height="3.5" fill="#858585"/><rect x="955.6" y="171.5" width="3" height="3.5" fill="#858585"/>
<!-- brushes -->
<rect x="948" y="202" width="9" height="7" fill="#d2d2d2"/>
<path d="M949.5 202 L946.5 195 M952 202 L951.5 191 M955 202 L957.5 196" stroke="#d2d2d2" stroke-width="1.6"/>
<ellipse cx="946.5" cy="194" rx="1.8" ry="2.8" fill="#d2d2d2"/><ellipse cx="951.2" cy="190.5" rx="1.6" ry="2.8" fill="#d2d2d2"/><ellipse cx="957.5" cy="194.5" rx="2.8" ry="2" fill="#d2d2d2"/>
<!-- club -->
<circle cx="952" cy="221" r="3.6" fill="#d2d2d2"/><circle cx="947.8" cy="226.5" r="3.6" fill="#d2d2d2"/><circle cx="956.2" cy="226.5" r="3.6" fill="#d2d2d2"/>
<path d="M952 223 L950 232.5 H954 Z M947.5 233 H956.5" fill="#d2d2d2" stroke="#d2d2d2" stroke-width="1"/>
<!-- stroke lines -->
<rect x="944" y="260.5" width="16" height="1.5" fill="#d2d2d2"/><rect x="944" y="265" width="16" height="2.5" fill="#d2d2d2"/><rect x="944" y="270" width="16" height="3.5" fill="#d2d2d2"/>
<!-- gradient rect -->
<rect x="944.5" y="289.5" width="16" height="12" fill="url(#dg)" stroke="#d8d8d8" stroke-width="1"/>
<!-- transparency circles -->
<circle cx="950" cy="319" r="5.5" fill="#cfcfcf"/>
<circle cx="954" cy="324" r="5.5" fill="#8a8a8a" stroke="#c4c4c4" stroke-width="1"/>
<!-- artboards -->
<rect x="947.5" y="357.5" width="12.5" height="11" fill="none" stroke="#d8d8d8" stroke-width="1.2"/>
<rect x="943.5" y="364.5" width="5" height="5" fill="#535353" stroke="#d8d8d8" stroke-width="1.2"/>
<rect x="946.5" y="367.5" width="4.5" height="4.5" fill="#535353" stroke="#d8d8d8" stroke-width="1.2"/>
</svg>
<div class="a" style="left:973px;top:77px;width:240px;height:28px;background:#454545"></div>
<div class="a" style="left:973px;top:77px;width:54px;height:28px;background:#535353"></div>
<div class="t" style="left:982.5px;top:86.66px;font-size:9.5px;color:#f0f0f0;font-weight:bold">Actions</div>
<svg style="left:1197px;top:88px" width="11" height="8"><path d="M0 0.6H11M0 4H11M0 7.4H11" stroke="#cfcfcf" stroke-width="1.2"/></svg>
<div class="a" style="left:978px;top:111px;width:230px;height:285px;border:1px solid #5e5e5e;background:#535353"></div>
<svg style="left:0;top:0" width="1215" height="719"><path d="M979 130.6 H1194" stroke="#5f5f5f" stroke-width="1"/><path d="M979 149.7 H1194" stroke="#5f5f5f" stroke-width="1"/><path d="M979 168.8 H1194" stroke="#5f5f5f" stroke-width="1"/><path d="M979 187.9 H1194" stroke="#5f5f5f" stroke-width="1"/><path d="M979 207.0 H1194" stroke="#5f5f5f" stroke-width="1"/><path d="M979 226.1 H1194" stroke="#5f5f5f" stroke-width="1"/><path d="M979 245.2 H1194" stroke="#5f5f5f" stroke-width="1"/><path d="M979 264.3 H1194" stroke="#5f5f5f" stroke-width="1"/><path d="M979 283.4 H1194" stroke="#5f5f5f" stroke-width="1"/><path d="M979 302.5 H1194" stroke="#5f5f5f" stroke-width="1"/><path d="M979 321.6 H1194" stroke="#5f5f5f" stroke-width="1"/><path d="M979 340.7 H1194" stroke="#5f5f5f" stroke-width="1"/><path d="M979 359.8 H1194" stroke="#5f5f5f" stroke-width="1"/><path d="M979 378.9 H1194" stroke="#5f5f5f" stroke-width="1"/><path d="M999.5 112 V395 M1020.5 112 V395" stroke="#5f5f5f" stroke-width="1"/><path d="M984 120.0 L987.5 124.0 L995 115.5" stroke="#c9c9c9" stroke-width="2" fill="none"/><rect x="1005.5" y="116.5" width="8.5" height="8.3" fill="none" stroke="#c9c9c9" stroke-width="1"/><rect x="1005.5" y="116.5" width="8.5" height="1.8" fill="#c9c9c9"/><path d="M1007.5 121.0 H1012" stroke="#c9c9c9" stroke-width="1"/><path d="M1028 119.0 L1031.5 122.5 L1035 119.0" stroke="#e0e0e0" stroke-width="1.5" fill="none"/><path d="M1045 116.0 H1050 L1052 118.0 H1059 V126.0 H1045 Z" fill="#d0d0d0"/><path d="M984 139.1 L987.5 143.1 L995 134.6" stroke="#c9c9c9" stroke-width="2" fill="none"/><path d="M1050.5 136.6 L1054 140.1 L1050.5 143.6" stroke="#e0e0e0" stroke-width="1.5" fill="none"/><path d="M984 158.2 L987.5 162.2 L995 153.7" stroke="#c9c9c9" stroke-width="2" fill="none"/><path d="M1050.5 155.7 L1054 159.2 L1050.5 162.7" stroke="#e0e0e0" stroke-width="1.5" fill="none"/><path d="M984 177.3 L987.5 181.3 L995 172.8" stroke="#c9c9c9" stroke-width="2" fill="none"/><path d="M1050.5 174.8 L1054 178.3 L1050.5 181.8" stroke="#e0e0e0" stroke-width="1.5" fill="none"/><path d="M984 196.4 L987.5 200.4 L995 191.9" stroke="#c9c9c9" stroke-width="2" fill="none"/><rect x="1005.5" y="192.9" width="8.5" height="8.3" fill="none" stroke="#c9c9c9" stroke-width="1"/><rect x="1005.5" y="192.9" width="8.5" height="1.8" fill="#c9c9c9"/><path d="M1050.5 193.9 L1054 197.4 L1050.5 200.9" stroke="#e0e0e0" stroke-width="1.5" fill="none"/><path d="M984 215.5 L987.5 219.5 L995 211.0" stroke="#c9c9c9" stroke-width="2" fill="none"/><rect x="1005.5" y="212.0" width="8.5" height="8.3" fill="none" stroke="#c9c9c9" stroke-width="1"/><rect x="1005.5" y="212.0" width="8.5" height="1.8" fill="#c9c9c9"/><path d="M1050.5 213.0 L1054 216.5 L1050.5 220.0" stroke="#e0e0e0" stroke-width="1.5" fill="none"/><path d="M984 234.6 L987.5 238.6 L995 230.1" stroke="#c9c9c9" stroke-width="2" fill="none"/><rect x="1005.5" y="231.1" width="8.5" height="8.3" fill="none" stroke="#c9c9c9" stroke-width="1"/><rect x="1005.5" y="231.1" width="8.5" height="1.8" fill="#c9c9c9"/><path d="M1050.5 232.1 L1054 235.6 L1050.5 239.1" stroke="#e0e0e0" stroke-width="1.5" fill="none"/><path d="M984 253.7 L987.5 257.7 L995 249.2" stroke="#c9c9c9" stroke-width="2" fill="none"/><path d="M1050.5 251.2 L1054 254.7 L1050.5 258.2" stroke="#e0e0e0" stroke-width="1.5" fill="none"/><path d="M984 272.8 L987.5 276.8 L995 268.3" stroke="#c9c9c9" stroke-width="2" fill="none"/><path d="M1050.5 270.3 L1054 273.8 L1050.5 277.3" stroke="#e0e0e0" stroke-width="1.5" fill="none"/><path d="M984 291.9 L987.5 295.9 L995 287.4" stroke="#c9c9c9" stroke-width="2" fill="none"/><path d="M1050.5 289.4 L1054 292.9 L1050.5 296.4" stroke="#e0e0e0" stroke-width="1.5" fill="none"/><path d="M984 311.0 L987.5 315.0 L995 306.5" stroke="#c9c9c9" stroke-width="2" fill="none"/><rect x="1005.5" y="307.5" width="8.5" height="8.3" fill="none" stroke="#c9c9c9" stroke-width="1"/><rect x="1005.5" y="307.5" width="8.5" height="1.8" fill="#c9c9c9"/><path d="M1007.5 312.0 H1012" stroke="#c9c9c9" stroke-width="1"/><path d="M1050.5 308.5 L1054 312.0 L1050.5 315.5" stroke="#e0e0e0" stroke-width="1.5" fill="none"/><path d="M984 330.1 L987.5 334.1 L995 325.6" stroke="#c9c9c9" stroke-width="2" fill="none"/><rect x="1005.5" y="326.6" width="8.5" height="8.3" fill="none" stroke="#c9c9c9" stroke-width="1"/><rect x="1005.5" y="326.6" width="8.5" height="1.8" fill="#c9c9c9"/><path d="M1050.5 327.6 L1054 331.1 L1050.5 334.6" stroke="#e0e0e0" stroke-width="1.5" fill="none"/><path d="M984 349.2 L987.5 353.2 L995 344.7" stroke="#c9c9c9" stroke-width="2" fill="none"/><rect x="1005.5" y="345.7" width="8.5" height="8.3" fill="none" stroke="#c9c9c9" stroke-width="1"/><rect x="1005.5" y="345.7" width="8.5" height="1.8" fill="#c9c9c9"/><path d="M1050.5 346.7 L1054 350.2 L1050.5 353.7" stroke="#e0e0e0" stroke-width="1.5" fill="none"/><path d="M984 368.3 L987.5 372.3 L995 363.8" stroke="#c9c9c9" stroke-width="2" fill="none"/><rect x="1005.5" y="364.8" width="8.5" height="8.3" fill="none" stroke="#c9c9c9" stroke-width="1"/><rect x="1005.5" y="364.8" width="8.5" height="1.8" fill="#c9c9c9"/><path d="M1050.5 365.8 L1054 369.3 L1050.5 372.8" stroke="#e0e0e0" stroke-width="1.5" fill="none"/><path d="M984 387.4 L987.5 391.4 L995 382.9" stroke="#c9c9c9" stroke-width="2" fill="none"/><path d="M1050.5 384.9 L1054 388.4 L1050.5 391.9" stroke="#e0e0e0" stroke-width="1.5" fill="none"/><path d="M1197.5 120 L1201.5 116 L1205.5 120" stroke="#8a8a8a" stroke-width="1.2" fill="none"/><rect x="1197" y="124" width="9" height="62" rx="4.5" fill="#5d5d5d"/><path d="M1197.5 388 L1201.5 392 L1205.5 388" stroke="#8a8a8a" stroke-width="1.2" fill="none"/><rect x="1045" y="403" width="9" height="9" fill="#6a6a6a"/><circle cx="1075.5" cy="407.5" r="4.8" fill="#6a6a6a"/><path d="M1096.5 402 L1106.5 407.5 L1096.5 413 Z" fill="#6a6a6a"/><path d="M1121 402 H1126 L1128 404 H1134 V412.5 H1121 Z" fill="#d0d0d0"/><path d="M1149 402 H1159 V412.5 H1153 L1149 408.5 Z" fill="#d0d0d0"/><path d="M1149 408.5 H1153 V412.5" fill="#535353" stroke="#d0d0d0" stroke-width="0.8"/><path d="M1175.5 404.5 H1184.5 M1177 404.5 V413 H1183 V404.5 M1178.5 403 H1181.5 M1179 406 V411.5 M1181 406 V411.5" stroke="#6a6a6a" stroke-width="1" fill="none"/></svg>
<div class="t" style="left:1063px;top:117.83px;font-size:10px;color:#e4e4e4;">Default Actions</div>
<div class="t" style="left:1067px;top:136.93px;font-size:10px;color:#e4e4e4;">Opacity 60 (selection)</div>
<div class="t" style="left:1067px;top:156.03px;font-size:10px;color:#e4e4e4;">Opacity 40 Screen (selecti...</div>
<div class="t" style="left:1067px;top:175.13px;font-size:10px;color:#e4e4e4;">Apply Default Style (select...</div>
<div class="t" style="left:1067px;top:194.23px;font-size:10px;color:#e4e4e4;">Save For Web GIF 64 Dith...</div>
<div class="t" style="left:1067px;top:213.33px;font-size:10px;color:#e4e4e4;">Save For Web JPG Medium</div>
<div class="t" style="left:1067px;top:232.44px;font-size:10px;color:#e4e4e4;">Save For Web PNG 24</div>
<div class="t" style="left:1067px;top:251.54px;font-size:10px;color:#e4e4e4;">Simplify (selection)</div>
<div class="t" style="left:1067px;top:270.64px;font-size:10px;color:#e4e4e4;">Simplify Straight (selection)</div>
<div class="t" style="left:1067px;top:289.73px;font-size:10px;color:#e4e4e4;">Revert</div>
<div class="t" style="left:1067px;top:308.84px;font-size:10px;color:#e4e4e4;">Delete Unused Panel Items</div>
<div class="t" style="left:1067px;top:327.94px;font-size:10px;color:#e4e4e4;">Move Dialog (selection)</div>
<div class="t" style="left:1067px;top:347.04px;font-size:10px;color:#e4e4e4;">Scale Dialog (selection)</div>
<div class="t" style="left:1067px;top:366.14px;font-size:10px;color:#e4e4e4;">Rotate Dialog (selection)</div>
<div class="t" style="left:1067px;top:385.24px;font-size:10px;color:#e4e4e4;">Rotate 90 CW (selection)</div>
<div class="a" style="left:973px;top:417px;width:240px;height:2px;background:#393939"></div>
<div class="a" style="left:973px;top:419px;width:240px;height:28px;background:#454545"></div>
<div class="a" style="left:1127px;top:419px;width:46px;height:28px;background:#535353"></div>
<div class="a" style="left:1024px;top:419px;width:1px;height:28px;background:#3a3a3a"></div>
<div class="a" style="left:1075px;top:419px;width:1px;height:28px;background:#3a3a3a"></div>
<div class="a" style="left:1126px;top:419px;width:1px;height:28px;background:#3a3a3a"></div>
<div class="a" style="left:975px;top:419px;width:49px;height:28px;overflow:hidden"><div class="t" style="left:7px;top:10.16px;font-size:9.5px;color:#a9a9a9;font-weight:bold">Variables</div>
</div>
<div class="a" style="left:1025px;top:419px;width:50px;height:28px;overflow:hidden"><div class="t" style="left:8.3px;top:10.16px;font-size:9.5px;color:#a9a9a9;font-weight:bold">Appearance</div>
</div>
<div class="a" style="left:1076px;top:419px;width:50px;height:28px;overflow:hidden"><div class="t" style="left:8.6px;top:10.16px;font-size:9.5px;color:#a9a9a9;font-weight:bold">Asset Export</div>
</div>
<div class="t" style="left:1135.5px;top:429.58px;font-size:9px;color:#f0f0f0;font-weight:bold">Layers</div>
<svg style="left:1197px;top:430px" width="11" height="8"><path d="M0 0.6H11M0 4H11M0 7.4H11" stroke="#cfcfcf" stroke-width="1.2"/></svg>
<div class="a" style="left:978px;top:453px;width:230px;height:265px;border-left:1px solid #5a5a5a;border-right:1px solid #5a5a5a"></div>
<div class="a" style="left:979px;top:454px;width:229px;height:20px;background:#4b6380"></div>
<svg style="left:0;top:0" width="1215" height="719">
<path d="M979 474.5 H1207 M979 494.5 H1207" stroke="#5d5d5d" stroke-width="1"/>
<path d="M999.5 454 V494 M1020.5 454 V494 M1027.5 454 V494 M1171.5 454 V494" stroke="#5a5a5a" stroke-width="1"/>
<path d="M982.5 463.5 Q988.5 457 994.5 463.5 Q988.5 470 982.5 463.5 Z" fill="#d0d0d0"/><circle cx="988.5" cy="463.5" r="2.2" fill="#666"/>
<path d="M982.5 484.5 Q988.5 478 994.5 484.5 Q988.5 491 982.5 484.5 Z" fill="#d0d0d0"/><circle cx="988.5" cy="484.5" r="2.2" fill="#666"/>
<rect x="1022" y="455" width="3.3" height="18" fill="#4f7dff"/>
<rect x="1022" y="476" width="3.3" height="18" fill="#ff4848"/>
<path d="M1033.5 460 L1037 463.5 L1033.5 467" stroke="#e8e8e8" stroke-width="1.5" fill="none"/>
<path d="M1033.5 481 L1037 484.5 L1033.5 488" stroke="#e8e8e8" stroke-width="1.5" fill="none"/>
<rect x="1051.5" y="455.5" width="17" height="17" fill="#fff" stroke="#000" stroke-width="1"/>
<path d="M1055 458.5 Q1058 456 1063 457 Q1066 459 1065 463 L1063 466 L1064 471 L1056 471.5 L1055.5 465 Z" fill="#d8d0d0" stroke="#b06060" stroke-width="0.8"/><path d="M1055.5 457.5 L1059 457 L1057 461 Z" fill="#d03030"/><rect x="1059.5" y="463" width="2.5" height="7.5" fill="#cc3333"/><circle cx="1058" cy="460.5" r="1" fill="#555"/><circle cx="1062" cy="460.5" r="1" fill="#555"/>
<rect x="1051.5" y="476.5" width="17" height="17" fill="#fff" stroke="#000" stroke-width="1"/>
<rect x="1052" y="480" width="16" height="10" fill="#6b6fc0"/>
<circle cx="1182" cy="464" r="3.8" fill="none" stroke="#d4d4d4" stroke-width="1"/>
<circle cx="1182" cy="485" r="3.8" fill="none" stroke="#d4d4d4" stroke-width="1"/>
<rect x="1192.5" y="460.5" width="7" height="7" fill="#4a7cff" stroke="#000" stroke-width="1"/>
<path d="M1201 454 H1207.5 V460.5 Z" fill="#e0e0e0"/>
</svg>
<div class="t" style="left:1073.7px;top:459.24px;font-size:10px;color:#ececec;">Cats</div>
<div class="t" style="left:1073.7px;top:480.45px;font-size:9.75px;color:#ececec;">Background</div>
</body></html>
